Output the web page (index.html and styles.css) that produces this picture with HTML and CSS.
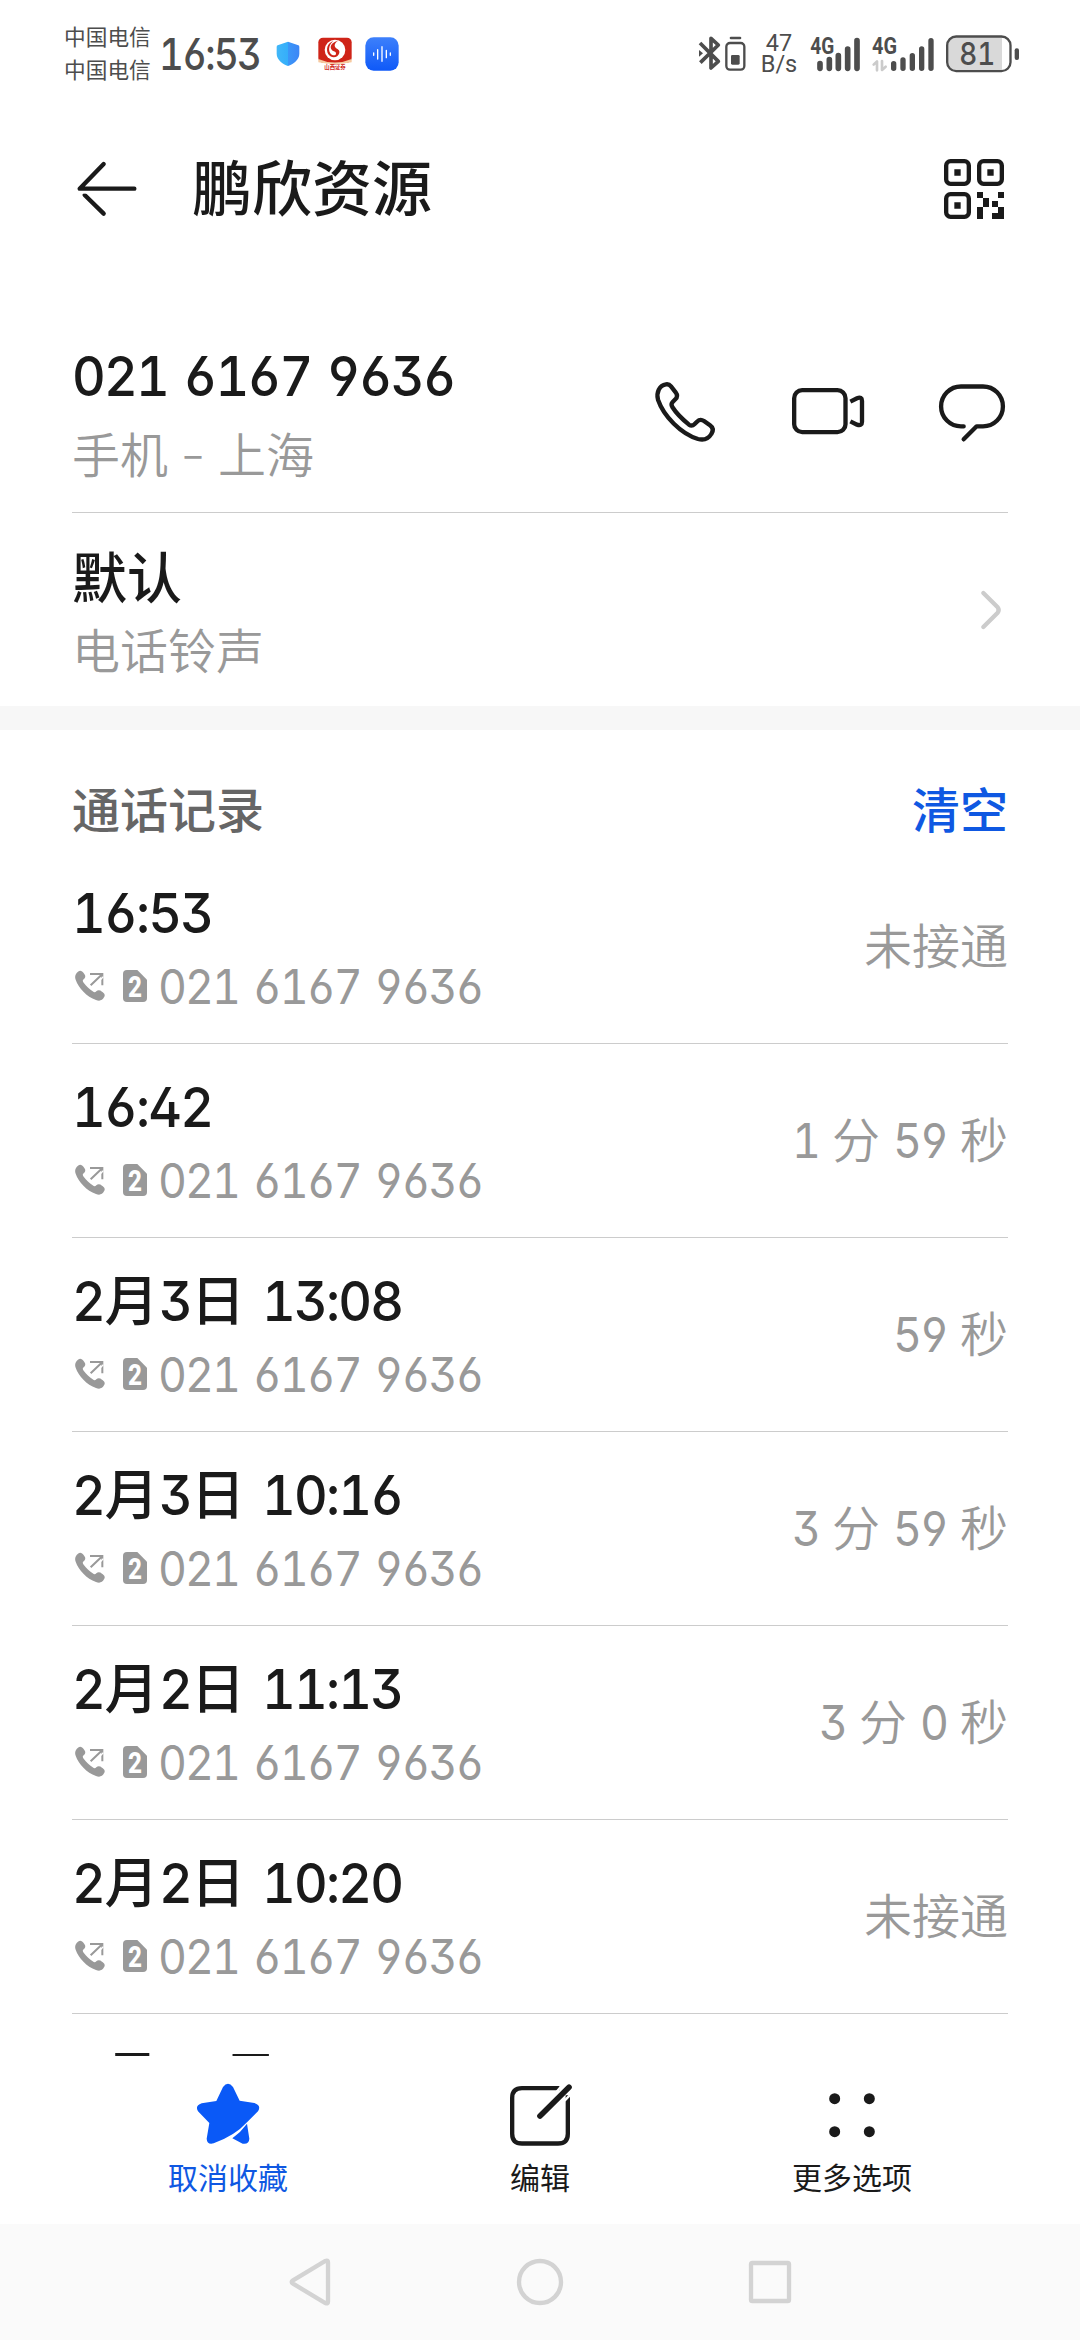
FILE: index.html
```html
<!DOCTYPE html>
<html lang="zh-CN">
<head>
<meta charset="utf-8">
<title>鹏欣资源</title>
<link rel="stylesheet" href="styles.css">
</head>
<body>
<svg class="defs" width="0" height="0" aria-hidden="true">
  <symbol id="outgoing" viewBox="0 0 96 96">
    <path d="M14 4C19 0 25 4 31 12C36 18 34 24 29 28C25 31 26 34 29 38C37 48 46 57 56 64C61 68 64 67 67 64C72 59 78 60 84 65C91 70 95 74 90 82C85 92 76 94 66 90C38 80 14 54 5 29C1 18 6 9 14 4Z" fill="currentColor"/>
    <path d="M48 12H85V46M83 14L50 46" fill="none" stroke="currentColor" stroke-width="6"/>
    <path d="M76 33L88 20" stroke="#fff" stroke-width="4"/>
  </symbol>
  <symbol id="sim" viewBox="0 0 72 96">
    <path d="M12 0H43L72 29V84Q72 96 60 96H12Q0 96 0 84V12Q0 0 12 0Z" fill="currentColor"/>
    <text x="15" y="82" textLength="42" lengthAdjust="spacingAndGlyphs" class="sim-digit">2</text>
  </symbol>
</svg>

<header class="status">
  <div class="carriers"><span>中国电信</span><span>中国电信</span></div>
  <div class="clock"><span class="num">16:53</span></div>
  <svg class="ic-shield" width="24" height="26" viewBox="0 0 72 78">
    <defs><linearGradient id="gs" x1="0" x2="1"><stop offset="0" stop-color="#41b7f8"/><stop offset=".5" stop-color="#35aefa"/><stop offset=".51" stop-color="#3b96f8"/><stop offset="1" stop-color="#3c86f6"/></linearGradient></defs>
    <path d="M36 2L67 13Q70 14 70 18V38C70 56 52 70 36 75C20 70 2 56 2 38V18Q2 14 5 13Z" fill="url(#gs)"/>
  </svg>
  <svg class="ic-stock" width="34" height="34" viewBox="0 0 102 102">
    <rect x="1" y="2" width="100" height="75" rx="14" fill="#cf2418"/>
    <path d="M1 66Q50 88 101 66V76Q50 86 1 76Z" fill="#f6c9a0"/>
    <circle cx="51" cy="39" r="31" fill="#fff"/>
    <path d="M60 11C40 16 34 28 41 38C45 44 55 42 54 50C53 58 41 56 36 47C30 36 35 21 46 12C28 18 23 37 31 52C40 65 60 63 64 48C67 35 51 36 50 26C50 20 54 15 60 11Z" fill="#cf2418"/>
    <text x="51" y="97" text-anchor="middle" textLength="64" lengthAdjust="spacingAndGlyphs" class="stock-name">山西证券</text>
  </svg>
  <svg class="ic-voice" width="34" height="34" viewBox="0 0 102 102">
    <defs><linearGradient id="gv" x1="0" y1="0" x2="0" y2="1"><stop offset="0" stop-color="#3d80fb"/><stop offset="1" stop-color="#0f59f8"/></linearGradient></defs>
    <rect x="1" y="1" width="100" height="100" rx="25" fill="url(#gv)"/>
    <path d="M26 48V55M38 38V66M51 29V73M64 40V62M76 48V55" stroke="#fff" stroke-width="4" stroke-linecap="round"/>
  </svg>
  <div class="status-right">
    <svg width="48" height="38" viewBox="54 105 144 114" fill="none" stroke="#4d4d4d" stroke-width="11" stroke-linejoin="round">
      <path d="M57 129L112 184L90 204V115L112 135L58 188"/>
      <path d="M54 150L66 160L54 170Z" fill="#4d4d4d" stroke="none"/>
      <rect x="136" y="129" width="54" height="80" rx="11" stroke-width="7"/>
      <path d="M150 114H177" stroke-linecap="round" stroke-width="8"/>
      <rect x="150" y="165" width="26" height="29" rx="4" fill="#4d4d4d" stroke="none"/>
    </svg>
    <div class="speed"><span>47</span><span>B/s</span></div>
    <svg class="sig1" width="51" height="36" viewBox="387 105 153 108" stroke="#4d4d4d" stroke-width="17" stroke-linecap="round">
      <path d="M417 188V202M445 176V202M472 164V202M500 144V202M528 119V202"/>
      <text x="388" y="159" textLength="72" lengthAdjust="spacingAndGlyphs" class="net">4G</text>
    </svg>
    <svg class="sig2" width="63" height="36" viewBox="573 105 189 108" stroke="#4d4d4d" stroke-width="16" stroke-linecap="round">
      <path d="M638 188V202M666 177V202M694 164V202M722 144V202M750 119V202"/>
      <text x="573" y="159" textLength="75" lengthAdjust="spacingAndGlyphs" class="net">4G</text>
      <path d="M578 191L588 181V208M603 180V207L614 197" fill="none" stroke="#cbcbcb" stroke-width="8" stroke-linejoin="round"/>
    </svg>
    <svg class="batt" width="74" height="38" viewBox="795 103 222 114">
      <path d="M826 107H963V211H826Q799 211 799 184V134Q799 107 826 107Z" fill="#d9d9d9"/>
      <rect x="798.500" y="107.500" width="190" height="104" rx="27" fill="none" stroke="#4d4d4d" stroke-width="7"/>
      <rect x="1001" y="143" width="13" height="35" rx="6" fill="#4d4d4d"/>
      <text x="835" y="194" textLength="108" lengthAdjust="spacingAndGlyphs" class="level">81</text>
    </svg>
  </div>
</header>

<div class="topbar">
  <svg width="60" height="56" viewBox="113 94 180 168" fill="none" stroke="#1a1a1a" stroke-width="13" stroke-linecap="round" stroke-linejoin="round">
    <path d="M285 177H121L193 103M193 252L136 196"/><path d="M118 188H146" stroke="#fff" stroke-width="8" stroke-linecap="butt"/>
  </svg>
  <h1>鹏欣资源</h1>
  <svg width="62" height="62" viewBox="123 84 186 186" fill="#1a1a1a">
    <g fill="none" stroke="#1a1a1a" stroke-width="13"><rect x="132.500" y="93.500" width="68" height="68" rx="13"/><rect x="231.500" y="93.500" width="68" height="68" rx="13"/><rect x="132.500" y="192.500" width="68" height="68" rx="13"/></g>
    <path d="M157 118h19v19h-19zM256 118h19v19h-19zM157 217h19v19h-19zM225 186h18v18h18v27h-18v36h-18v-36h18v-27h-18zM288 186h18v18h-18zM270 213h18v18h-18zM288 231h18v36h-36v-18h18z"/>
  </svg>
</div>

<section class="contact">
  <div class="item">
    <div class="lines"><div class="title"><span class="num phone">021 6167 9636</span></div><div class="sub">手机<span class="dash">–</span>上海</div></div>
    <svg class="ic-call" width="62" height="62" viewBox="99 93 186 186" fill="none" stroke="#1a1a1a" stroke-width="13" stroke-linejoin="round">
      <path d="M135 103C141 102 146 104 150 109L164 127C170 135 169 142 163 148L155 156C150 161 151 166 154 171C166 190 187 210 204 224C211 229 216 227 221 222L228 215C235 208 243 209 249 213L267 226C277 233 278 241 271 252C262 267 247 271 231 267C179 251 128 198 111 149C105 128 115 106 135 103Z"/>
    </svg>
    <svg class="ic-video" width="74" height="50" viewBox="513 110 222 150" fill="none" stroke="#1a1a1a" stroke-width="13">
      <rect x="522.500" y="122.500" width="154" height="126" rx="24"/><path d="M691 157L711 147Q726 141 726 155V217Q726 231 711 226L691 216"/>
    </svg>
    <svg class="ic-chat" width="68" height="60" viewBox="954 101 204 180" fill="none" stroke="#1a1a1a" stroke-width="13" stroke-linecap="round" stroke-linejoin="round">
      <path d="M1031 231H1023A59.500 59.500 0 0 1 1023 111.500H1089A59.500 59.500 0 0 1 1089 231H1070L1031 270"/>
    </svg>
  </div>
  <div class="item ring">
    <div class="lines"><div class="title">默认</div><div class="sub">电话铃声</div></div>
    <svg width="22" height="40" viewBox="1080 717 66 120" fill="none" stroke="#ccc" stroke-width="13" stroke-linecap="round" stroke-linejoin="round"><path d="M1090 726L1133 769Q1139 777 1133 785L1090 828"/></svg>
  </div>
</section>

<section class="log">
  <div class="log-head"><h2>通话记录</h2><a class="clear">清空</a></div>
  <ul>
    <li><div class="lines"><div class="title"><span class="num">16:53</span></div><div class="sub"><svg class="out"><use href="#outgoing"/></svg><svg class="sim"><use href="#sim"/></svg><span class="num">021 6167 9636</span></div></div><div class="dur">未接通</div></li>
    <li><div class="lines"><div class="title"><span class="num">16:42</span></div><div class="sub"><svg class="out"><use href="#outgoing"/></svg><svg class="sim"><use href="#sim"/></svg><span class="num">021 6167 9636</span></div></div><div class="dur"><span class="num n1">1</span>分<span class="num n2">59</span>秒</div></li>
    <li><div class="lines"><div class="title"><span class="num d1">2</span>月<span class="num d1">3</span>日<span class="num at">13:08</span></div><div class="sub"><svg class="out"><use href="#outgoing"/></svg><svg class="sim"><use href="#sim"/></svg><span class="num">021 6167 9636</span></div></div><div class="dur"><span class="num n2">59</span>秒</div></li>
    <li><div class="lines"><div class="title"><span class="num d1">2</span>月<span class="num d1">3</span>日<span class="num at">10:16</span></div><div class="sub"><svg class="out"><use href="#outgoing"/></svg><svg class="sim"><use href="#sim"/></svg><span class="num">021 6167 9636</span></div></div><div class="dur"><span class="num n1">3</span>分<span class="num n2">59</span>秒</div></li>
    <li><div class="lines"><div class="title"><span class="num d1">2</span>月<span class="num d1">2</span>日<span class="num at">11:13</span></div><div class="sub"><svg class="out"><use href="#outgoing"/></svg><svg class="sim"><use href="#sim"/></svg><span class="num">021 6167 9636</span></div></div><div class="dur"><span class="num n1">3</span>分<span class="num n1">0</span>秒</div></li>
    <li><div class="lines"><div class="title"><span class="num d1">2</span>月<span class="num d1">2</span>日<span class="num at">10:20</span></div><div class="sub"><svg class="out"><use href="#outgoing"/></svg><svg class="sim"><use href="#sim"/></svg><span class="num">021 6167 9636</span></div></div><div class="dur">未接通</div></li>
    <li><div class="lines"><div class="title"><span class="num d1">1</span>月<span class="num d2">31</span>日</div></div></li>
  </ul>
</section>

<nav class="tools">
  <div class="tool active">
    <svg width="64" height="64" viewBox="468 309 192 192" fill="#0a59f7">
      <path d="M549 321Q564 302 579 321L599 362L643 369Q665 376 654 394L621 427Q585 467 521 490Q501 495 500 476L508 429L474 394Q464 377 485 370L529 363Z"/>
      <path d="M621 431L628 476Q627 494 608 491L577 475Q602 457 621 431Z"/>
    </svg>
    <span>取消收藏</span>
  </div>
  <div class="tool">
    <svg width="64" height="64" viewBox="84 309 192 192" fill="none" stroke="#1a1a1a" stroke-width="13">
      <path d="M239 324.500H126Q96.500 324.500 96.500 354V461Q96.500 490.500 126 490.500H234Q263.500 490.500 263.500 461V346"/>
      <path d="M230 335L246 316M254 362L274 341" stroke="#fff" stroke-width="7"/>
      <path d="M180 408L267 322" stroke-width="17" stroke-linecap="round"/>
    </svg>
    <span>编辑</span>
  </div>
  <div class="tool">
    <svg width="64" height="64" viewBox="1020 309 192 192" fill="#1a1a1a"><circle cx="1064" cy="356" r="16.500"/><circle cx="1168" cy="356" r="16.500"/><circle cx="1064" cy="455" r="16.500"/><circle cx="1168" cy="455" r="16.500"/></svg>
    <span>更多选项</span>
  </div>
</nav>

<footer class="sysnav">
  <svg width="50" height="50" viewBox="731 831 150 150"><path d="M852 843Q860 839 860 847V965Q860 973 852 969L755 911Q747 906 755 901Z"/></svg>
  <svg width="50" height="50" viewBox="105 831 150 150"><circle cx="180" cy="906" r="63"/></svg>
  <svg width="50" height="50" viewBox="792 831 150 150"><rect x="810" y="849" width="114" height="114" rx="4"/></svg>
</footer>
</body>
</html>
```
FILE: styles.css
```css
* { box-sizing: border-box; }
body {
  margin: 0;
  width: 1080px;
  height: 2340px;
  overflow: hidden;
  display: flex;
  flex-direction: column;
  background: #fff;
  color: #1a1a1a;
  font-family: Inter, "Noto Sans CJK SC", sans-serif;
}
svg { display: block; flex: none; overflow: visible; }
.defs { position: absolute; }
h1, h2, ul { margin: 0; padding: 0; list-style: none; }

/* condensed tabular figures with open 6 and 9 */
.num {
  display: inline-block;
  font-family: Inter, sans-serif;
  font-feature-settings: "tnum", "ss01", "cv03", "cv04";
  white-space: pre;
  transform: scaleX(.94);
  transform-origin: 0 50%;
  letter-spacing: -1.9px;
}

/* status bar */
.status { display: flex; align-items: center; height: 108px; padding: 0 60px 0 64px; color: #4d4d4d; flex: none; }
.carriers { display: flex; flex-direction: column; font-size: 21.7px; line-height: 33px; }
.clock { width: 100px; margin-left: 8px; font-size: 44px; line-height: 60px; }
.clock .num { transform: scaleX(.87); font-weight: 450; }
.ic-shield { margin-left: 17px; }
.ic-stock { margin-left: 18px; }
.ic-voice { margin-left: 13px; }
.status-right { display: flex; align-items: center; margin-left: auto; }
.speed { display: flex; flex-direction: column; align-items: center; width: 36px; margin-left: 14px; font: 420 23.500px/21px Roboto, sans-serif; }
.sig1 { margin-left: 13px; }
.sig2 { margin-left: 11px; }
.batt { margin-left: 11px; }
.net { font: 700 70px Roboto, sans-serif; fill: #4d4d4d; stroke: none; }
.level { font: 500 94px Inter, sans-serif; font-feature-settings: "tnum"; fill: #4d4d4d; }
.stock-name { font: 700 17px "Noto Sans CJK SC", sans-serif; fill: #cf2418; }

/* title bar */
.topbar { display: flex; align-items: center; height: 162px; padding: 0 75px 0 77px; flex: none; }
.topbar h1 { flex: 1; margin-left: 55px; font-size: 60px; font-weight: 450; line-height: 80px; }

/* shared two-line cells */
.lines { flex: 1; }
.title { height: 72px; font-size: 54px; line-height: 72px; font-weight: 500; white-space: nowrap; }
.title .num { font-size: 55.5px; font-weight: 500; word-spacing: 3.3px; }
.sub { display: flex; align-items: center; height: 72px; font-size: 48px; line-height: 72px; font-weight: 350; color: #999; }
.sub .num { font-weight: 400; transform: scaleX(.93); letter-spacing: -2.07px; word-spacing: 3.9px; }
.dash { width: 50px; text-align: center; font-size: 34px; font-weight: 400; }

.contact { padding: 70px 72px 0; height: 436px; flex: none; }
.item { display: flex; height: 173px; border-bottom: 1px solid #ccc; }
.item .sub { margin-top: 8px; }
.ic-call { margin: 41px 0 0; }
.ic-video { margin: 46px 0 0 75px; }
.ic-chat { margin: 43px 2px 0 73px; }
.item.ring { align-items: center; height: 193px; padding: 0 6px 0 0; border-bottom: 0; }
.ring .title { margin-top: 10px; font-size: 55px; }
.ring .sub { margin-top: 2px; }

/* call log */
.log { border-top: 24px solid #f7f7f7; padding: 0 72px; height: 1350px; overflow: hidden; flex: none; }
.log-head { display: flex; align-items: center; justify-content: space-between; height: 120px; padding-top: 42px; }
.log-head h2 { font-size: 48px; line-height: 72px; font-weight: 450; color: #666; }
.clear { font-size: 48px; line-height: 72px; font-weight: 450; color: #0f58e2; }
.log li { display: flex; align-items: center; height: 194px; border-bottom: 1px solid #ccc; }
.log .lines { align-self: flex-start; padding-top: 27px; }
.log .sub { margin-top: 2px; }
.title .d1 { width: 32.5px; }
.title .d2 { width: 65px; }
.title .at { margin-left: 17px; }
.out { width: 32px; height: 32px; margin: -3px 0 0 2px; }
.sim { width: 24px; height: 32px; margin: -3px 11px 0 17px; }
.sim-digit { font: 800 90px Roboto, sans-serif; fill: #fff; }
.dur { display: flex; gap: 13px; font-size: 48px; line-height: 72px; font-weight: 350; color: #999; }
.dur .num { font-weight: 400; transform: scaleX(.93); letter-spacing: -2.07px; }
.n1 { width: 27px; }
.n2 { width: 54px; }

/* bottom actions */
.tools { display: flex; height: 168px; padding: 27px 72px 0; flex: none; }
.tool { flex: 1; display: flex; flex-direction: column; align-items: center; font-size: 30px; line-height: 40px; }
.tool span { margin-top: 11px; }
.active { color: #0f58e2; }

.sysnav { flex: 1; display: flex; align-items: center; justify-content: center; gap: 180px; background: #fafafa; }
.sysnav svg { fill: none; stroke: #d3d3d3; stroke-width: 13; }
```
